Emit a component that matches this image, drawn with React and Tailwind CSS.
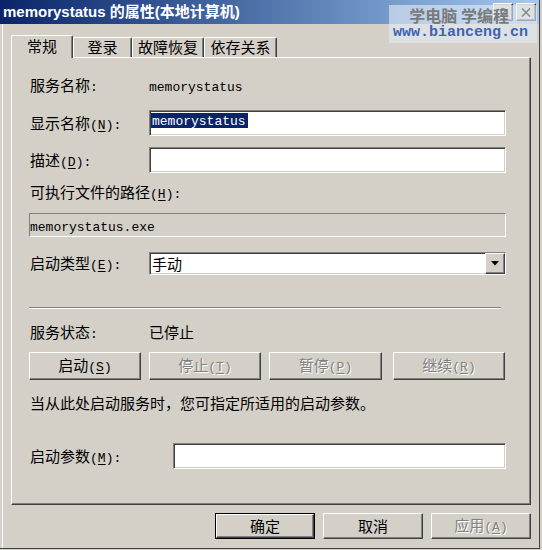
import React from "react";

const CJK = "font-['Noto_Sans_CJK_SC',sans-serif] text-[15px]";
const LAT = "font-['Liberation_Mono',monospace] text-[13px]";
const cjkRe = /[\u2E80-\u9FFF\u3000-\u303F\uFF00-\uFFEF]/;

function T({ s, className = "" }) {
  const runs = [];
  let i = 0;
  while (i < s.length) {
    const ch = s[i];
    if (ch === "&") {
      runs.push({ t: s[i + 1], k: "u" });
      i += 2;
      continue;
    }
    const k = cjkRe.test(ch) ? "c" : "l";
    const last = runs[runs.length - 1];
    if (last && last.k === k) last.t += ch;
    else runs.push({ t: ch, k });
    i++;
  }
  return (
    <span className={"whitespace-pre " + className}>
      {runs.map((r, idx) =>
        r.k === "c" ? (
          <span key={idx} className={CJK}>{r.t}</span>
        ) : r.k === "u" ? (
          <span key={idx} className={LAT + " underline underline-offset-2"}>{r.t}</span>
        ) : (
          <span key={idx} className={LAT}>{r.t}</span>
        )
      )}
    </span>
  );
}

const DIS = "text-[#808080] [text-shadow:1px_1px_0_#ffffff]";

function Sunken({ className = "", children }) {
  return (
    <div
      className={
        "border border-t-[#808080] border-l-[#808080] border-r-white border-b-white bg-white shadow-[inset_1px_1px_0_#404040,inset_-1px_-1px_0_#d4d0c8] " +
        className
      }
    >
      {children}
    </div>
  );
}

function Btn({ label, disabled, className = "" }) {
  return (
    <div
      className={
        "flex items-center justify-center border border-t-white border-l-white border-r-[#404040] border-b-[#404040] shadow-[inset_-1px_-1px_0_#808080] bg-[#d4d0c8] leading-[20px] " +
        className
      }
    >
      <T s={label} className={disabled ? DIS : "text-black"} />
    </div>
  );
}

function Tab({ label, selected, w }) {
  return (
    <div
      className={
        "flex items-start justify-center bg-[#d4d0c8] border-l border-t border-white border-r border-r-[#404040] rounded-t-[2px] shadow-[inset_-1px_0_0_#808080] " +
        (selected ? "h-[23px] -mb-[1px] relative z-10 pt-[1px]" : "h-[20px]") +
        " " +
        w
      }
    >
      <span className="leading-[18px]">
        <T s={label} />
      </span>
    </div>
  );
}

export default function App() {
  return (
    <div className="w-[542px] h-[550px] bg-[#d4d0c8] relative overflow-hidden text-black select-none">
      <div className="w-[540px] h-[549px] border-r border-b border-[#404040] flex flex-col">
        {/* Title bar */}
        <div className="h-[24px] w-full bg-gradient-to-r from-[#0a246a] to-[#a6caf0] flex items-center pl-[3px] pr-[3px]">
          <span className="text-white font-bold text-[15px] font-['Liberation_Sans','Noto_Sans_CJK_SC',sans-serif] leading-[20px] whitespace-pre">
            memorystatus 的属性(本地计算机)
          </span>
          <div className="ml-auto flex gap-[3px] items-center">
            <div className="w-[20px] h-[18px] flex items-center justify-center border border-t-white border-l-white border-r-[#404040] border-b-[#404040] shadow-[inset_-1px_-1px_0_#808080] bg-[#d4d0c8] text-[13px] font-bold font-['Liberation_Sans',sans-serif] leading-none">
              ?
            </div>
            <div className="w-[20px] h-[18px] flex items-center justify-center border border-t-white border-l-white border-r-[#404040] border-b-[#404040] shadow-[inset_-1px_-1px_0_#808080] bg-[#d4d0c8]">
              <svg width="10" height="9" viewBox="0 0 10 9">
                <path d="M1 0.5 L9 8.5 M9 0.5 L1 8.5" stroke="#000" strokeWidth="1.6" />
              </svg>
            </div>
          </div>
        </div>

        {/* Body */}
        <div className="flex-1 ml-[2px] border-l border-white pl-[8px] pt-[11px] flex flex-col">
          {/* Tabs */}
          <div className="flex items-end h-[22px]">
            <Tab label="常规" selected w="w-[62px]" />
            <Tab label="登录" w="w-[59px]" />
            <Tab label="故障恢复" w="w-[72px]" />
            <Tab label="依存关系" w="w-[73px]" />
          </div>

          {/* Panel */}
          <div className="w-[520px] h-[448px] border border-t-white border-l-white border-r-[#404040] border-b-[#404040] shadow-[inset_-1px_-1px_0_#808080] pl-[17px] pr-[24px] flex flex-col">
            <div className="mt-[17px] h-[20px] flex items-center">
              <div className="w-[120px] pl-px"><T s="服务名称:" /></div>
              <T s="memorystatus" />
            </div>

            <div className="mt-[15px] h-[26px] flex items-center">
              <div className="w-[120px] pl-px"><T s="显示名称(&N):" /></div>
              <Sunken className="flex-1 h-[26px] flex items-start pt-[2px] pl-[1px]">
                <span className="bg-[#0a246a] text-white h-[15px] leading-[15px] pl-px pr-[2px] flex items-center">
                  <T s="memorystatus" />
                </span>
              </Sunken>
            </div>

            <div className="mt-[11px] h-[26px] flex items-center">
              <div className="w-[120px] pl-px"><T s="描述(&D):" /></div>
              <Sunken className="flex-1 h-[26px]" />
            </div>

            <div className="mt-[9px] h-[20px] flex items-center pl-px">
              <T s="可执行文件的路径(&H):" />
            </div>

            <div className="mt-[11px] h-[24px] border border-t-[#808080] border-l-[#808080] border-r-white border-b-white flex items-center">
              <T s="memorystatus.exe" />
            </div>

            <div className="mt-[15px] h-[23px] flex items-center">
              <div className="w-[120px] pl-px"><T s="启动类型(&E):" /></div>
              <Sunken className="flex-1 h-[23px] flex items-center pl-[2px]">
                <T s="手动" />
                <div className="ml-auto h-full w-[20px] flex items-center justify-center border border-t-white border-l-white border-r-[#404040] border-b-[#404040] shadow-[inset_-1px_-1px_0_#808080] bg-[#d4d0c8]">
                  <svg width="8" height="5" viewBox="0 0 8 5">
                    <path d="M0 0 H8 L4 4.5 Z" fill="#000" />
                  </svg>
                </div>
              </Sunken>
            </div>

            <div className="mt-[32px] h-[2px] mr-[5px] border-t border-t-[#808080] border-b border-b-white" />

            <div className="mt-[13px] h-[20px] flex items-center">
              <div className="w-[120px] pl-px"><T s="服务状态:" /></div>
              <T s="已停止" />
            </div>

            <div className="mt-[10px] h-[28px] flex">
              <Btn label="启动(&S)" className="w-[112px] h-[28px]" />
              <Btn label="停止(&T)" disabled className="w-[112px] h-[28px] ml-[8px]" />
              <Btn label="暂停(&P)" disabled className="w-[113px] h-[28px] ml-[8px]" />
              <Btn label="继续(&R)" disabled className="w-[112px] h-[28px] ml-[11px]" />
            </div>

            <div className="mt-[13px] h-[20px] flex items-center pl-px">
              <T s="当从此处启动服务时，您可指定所适用的启动参数。" />
            </div>

            <div className="mt-[30px] h-[26px] flex items-center">
              <div className="w-[144px] pl-px"><T s="启动参数(&M):" /></div>
              <Sunken className="flex-1 h-[26px]" />
            </div>
          </div>

          {/* Dialog buttons */}
          <div className="w-[520px] mt-[8px] h-[26px] flex justify-end gap-[8px]">
            <div className="w-[100px] h-[26px] border border-black">
              <Btn label="确定" className="w-full h-full" />
            </div>
            <Btn label="取消" className="w-[100px] h-[26px]" />
            <Btn label="应用(&A)" disabled className="w-[100px] h-[26px]" />
          </div>
        </div>
      </div>

      {/* Watermark overlay */}
      <div className="absolute left-[389px] top-[5px] w-[148px] h-[38px] bg-[#e4ecf6]/60 flex flex-col items-end pr-[6px]">
        <span className="text-[#7a7a7a] font-bold text-[16px] leading-[18px] font-['Noto_Sans_CJK_SC',sans-serif] pr-[22px] mt-[1px] whitespace-pre">
          学电脑 学编程
        </span>
        <span className="text-[#3f63b5] font-bold text-[15px] leading-[18px] font-['Liberation_Mono',monospace] self-start pl-[4px]">
          www.bianceng.cn
        </span>
      </div>
    </div>
  );
}
